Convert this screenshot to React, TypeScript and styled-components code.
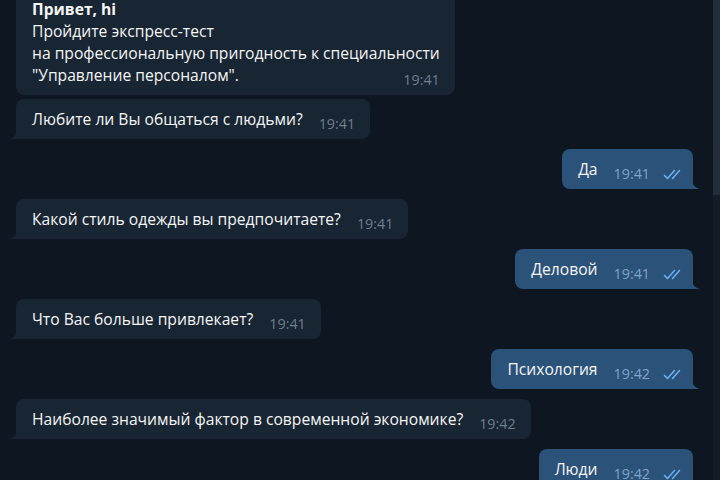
import React from "react";
import styled, { createGlobalStyle, css } from "styled-components";

const Global = createGlobalStyle`
  html, body { margin: 0; padding: 0; background: #0e1621; }
  body { font-family: "Open Sans", "Noto Sans", sans-serif; -webkit-font-smoothing: antialiased; }
  * { box-sizing: border-box; }
`;

const Screen = styled.div`
  width: 720px;
  height: 480px;
  display: flex;
  overflow: hidden;
  background: #0e1621;
`;

const Viewport = styled.div`
  flex: 1;
  overflow: hidden;
  padding: 0 20px 0 16px;
`;

const List = styled.div`
  margin-top: -11px;
  display: flex;
  flex-direction: column;
  gap: 10px;
`;

const Group = styled.div<{ $out?: boolean }>`
  display: flex;
  flex-direction: column;
  gap: 4px;
  align-items: ${(p) => (p.$out ? "flex-end" : "flex-start")};
`;

const tailIn = `url("data:image/svg+xml;utf8,<svg xmlns='http://www.w3.org/2000/svg' width='8' height='10' viewBox='0 0 8 10'><path d='M8 0 Q8 8 0 10 L8 10 Z' fill='%23182533'/></svg>")`;
const tailOut = `url("data:image/svg+xml;utf8,<svg xmlns='http://www.w3.org/2000/svg' width='8' height='10' viewBox='0 0 8 10'><path d='M0 0 Q0 8 8 10 L0 10 Z' fill='%232b5278'/></svg>")`;

const Bubble = styled.div<{ $out?: boolean; $tail?: boolean }>`
  position: relative;
  display: flow-root;
  max-width: 560px;
  padding: 9px ${(p) => (p.$out ? "9px" : "15px")} 9px 16px;
  border-radius: 8px;
  background: ${(p) => (p.$out ? "#2b5278" : "#182533")};
  color: #f5f5f5;
  font-size: 15.65px;
  line-height: 22px;
  ${(p) =>
    p.$tail &&
    css`
      ${p.$out ? "border-bottom-right-radius: 0;" : "border-bottom-left-radius: 0;"}
      &::after {
        content: "";
        position: absolute;
        bottom: 0;
        width: 8px;
        height: 10px;
        ${p.$out ? "right: -7px;" : "left: -7px;"}
        background: ${p.$out ? tailOut : tailIn};
      }
    `}
`;

const Title = styled.div`
  font-weight: 700;
`;

const Meta = styled.span<{ $out?: boolean }>`
  float: right;
  display: inline-flex;
  align-items: center;
  gap: 13px;
  margin: 10px 0 0 16px;
  height: 12px;
  font-size: 14.3px;
  line-height: 12px;
  color: ${(p) => (p.$out ? "#7ea5cb" : "#6d7f8f")};
`;

const Checks = () => (
  <svg width="21" height="11" viewBox="0 0 21 11" fill="none" stroke="#6ab3f3" strokeWidth="1.5" strokeLinecap="round" strokeLinejoin="round">
    <path d="M1.5 6.5 L4.5 9.5 L11.5 1.5" />
    <path d="M9.5 9.5 L16.5 1.5" />
  </svg>
);

const Track = styled.div`
  width: 7px;
  height: 100%;
  background: #131c27;
  display: flex;
  flex-direction: column;
`;

const Thumb = styled.div`
  height: 195px;
  background: #242e3a;
`;

type Msg = { text: React.ReactNode; time: string; out?: boolean };

const Message = ({ m, tail }: { m: Msg; tail?: boolean }) => (
  <Bubble $out={m.out} $tail={tail}>
    {m.text}
    <Meta $out={m.out}>
      {m.time}
      {m.out && <Checks />}
    </Meta>
  </Bubble>
);

const groups: { out?: boolean; msgs: Msg[] }[] = [
  {
    msgs: [
      {
        text: (
          <>
            <Title>Привет, hi</Title>
            Пройдите экспресс-тест
            <br />
            на профессиональную пригодность к специальности
            <br />
            "Управление персоналом".
          </>
        ),
        time: "19:41",
      },
      { text: "Любите ли Вы общаться с людьми?", time: "19:41" },
    ],
  },
  { out: true, msgs: [{ text: "Да", time: "19:41", out: true }] },
  { msgs: [{ text: "Какой стиль одежды вы предпочитаете?", time: "19:41" }] },
  { out: true, msgs: [{ text: "Деловой", time: "19:41", out: true }] },
  { msgs: [{ text: "Что Вас больше привлекает?", time: "19:41" }] },
  { out: true, msgs: [{ text: "Психология", time: "19:42", out: true }] },
  { msgs: [{ text: "Наиболее значимый фактор в современной экономике?", time: "19:42" }] },
  { out: true, msgs: [{ text: "Люди", time: "19:42", out: true }] },
];

export default function App() {
  return (
    <>
      <Global />
      <Screen>
        <Viewport>
          <List>
            {groups.map((g, gi) => (
              <Group key={gi} $out={g.out}>
                {g.msgs.map((m, mi) => (
                  <Message key={mi} m={m} tail={mi === g.msgs.length - 1} />
                ))}
              </Group>
            ))}
          </List>
        </Viewport>
        <Track>
          <Thumb />
        </Track>
      </Screen>
    </>
  );
}
